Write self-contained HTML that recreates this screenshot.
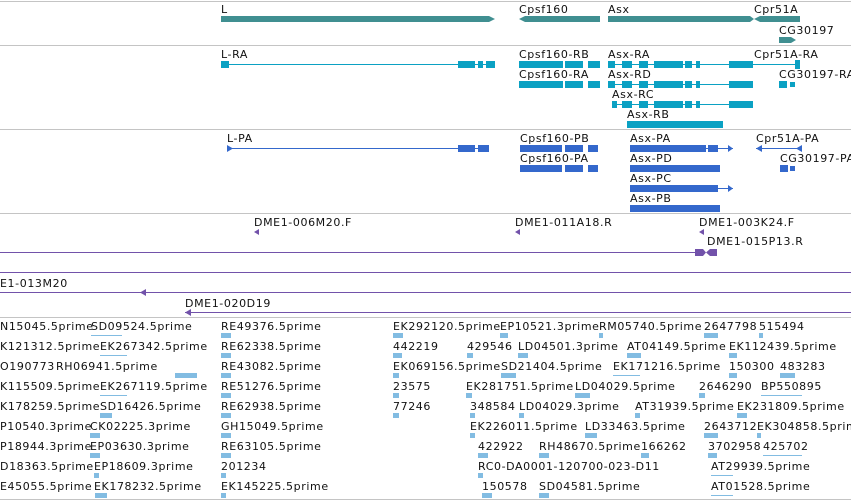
<!DOCTYPE html>
<html><head><meta charset="utf-8"><style>
html,body{margin:0;padding:0;background:#fff;width:851px;height:501px;overflow:hidden}
svg{display:block}
text{font-family:"DejaVu Sans","Liberation Sans",sans-serif;font-size:11px;letter-spacing:0.6px;fill:#111}
</style></head><body>
<svg width="851" height="501" viewBox="0 0 851 501">
<g stroke="#c4c4c4" stroke-width="1">
<line x1="0" y1="1.5" x2="851" y2="1.5"/><line x1="0" y1="45.5" x2="851" y2="45.5"/>
<line x1="0" y1="129.5" x2="851" y2="129.5"/><line x1="0" y1="213.5" x2="851" y2="213.5"/>
<line x1="0" y1="317.5" x2="851" y2="317.5"/><line x1="0" y1="499.5" x2="851" y2="499.5"/>
</g>
<g fill="#408f91">
<polygon points="221,16 489,16 495,19 489,22 221,22"/>
<polygon points="525,16 600,16 600,22 525,22 519,19"/>
<polygon points="608,16 750,16 754,19 760,16 800,16 800,22 760,22 754,19 750,22 608,22"/>
<polygon points="779,37 791,37 796,40 791,43 779,43"/>
</g>
<text x="221" y="13">L</text><text x="519" y="13">Cpsf160</text><text x="608" y="13">Asx</text><text x="754" y="13">Cpr51A</text><text x="779" y="34">CG30197</text>
<g fill="#0ba1c3" stroke="#0ba1c3">
<line x1="221" y1="64.5" x2="495" y2="64.5"/>
<line x1="608" y1="64.5" x2="800" y2="64.5"/>
<line x1="608" y1="84.5" x2="753" y2="84.5"/>
<line x1="612" y1="104.5" x2="753" y2="104.5"/>
<line x1="627" y1="124.5" x2="723" y2="124.5"/>
</g>
<g fill="#0ba1c3">
<rect x="221" y="61" width="8" height="7"/><rect x="458" y="61" width="17" height="7"/><rect x="478" y="61" width="5" height="7"/><rect x="486" y="61" width="9" height="7"/>
<rect x="519" y="61" width="44" height="7"/><rect x="565" y="61" width="18" height="7"/><rect x="588" y="61" width="12" height="7"/>
<rect x="519" y="81" width="44" height="7"/><rect x="565" y="81" width="18" height="7"/><rect x="588" y="81" width="12" height="7"/>
<rect x="608" y="61" width="7" height="7"/><rect x="622" y="61" width="10" height="7"/><rect x="639" y="61" width="9" height="7"/><rect x="654" y="61" width="29" height="7"/><rect x="685" y="61" width="7" height="7"/><rect x="696" y="61" width="4" height="7"/><rect x="729" y="61" width="24" height="7"/><rect x="795" y="60" width="5" height="9"/>
<rect x="608" y="81" width="7" height="7"/><rect x="622" y="81" width="10" height="7"/><rect x="639" y="81" width="9" height="7"/><rect x="654" y="81" width="29" height="7"/><rect x="685" y="81" width="7" height="7"/><rect x="696" y="81" width="4" height="7"/><rect x="729" y="81" width="24" height="7"/>
<rect x="612" y="101" width="5" height="7"/><rect x="622" y="101" width="10" height="7"/><rect x="639" y="101" width="9" height="7"/><rect x="654" y="101" width="29" height="7"/><rect x="685" y="101" width="7" height="7"/><rect x="696" y="101" width="4" height="7"/><rect x="729" y="101" width="24" height="7"/>
<rect x="627" y="121" width="96" height="7"/>
<rect x="779" y="81" width="8" height="7"/><rect x="790" y="82" width="5" height="5"/>
</g>
<text x="221" y="58">L-RA</text><text x="519" y="58">Cpsf160-RB</text><text x="519" y="78">Cpsf160-RA</text><text x="608" y="58">Asx-RA</text><text x="754" y="58">Cpr51A-RA</text>
<text x="608" y="78">Asx-RD</text><text x="779" y="78">CG30197-RA</text><text x="612" y="98">Asx-RC</text><text x="627" y="118">Asx-RB</text>
<g stroke="#3468cc">
<line x1="227" y1="148.5" x2="489" y2="148.5"/>
<line x1="630" y1="148.5" x2="733" y2="148.5"/>
<line x1="630" y1="188.5" x2="733" y2="188.5"/>
<line x1="756" y1="148.5" x2="802" y2="148.5"/>
</g>
<g fill="#3468cc">
<polygon points="227,145 233,148.5 227,152"/><rect x="458" y="145" width="17" height="7"/><rect x="478" y="145" width="11" height="7"/>
<rect x="520" y="145" width="42" height="7"/><rect x="565" y="145" width="18" height="7"/><rect x="588" y="145" width="10" height="7"/>
<rect x="520" y="165" width="42" height="7"/><rect x="565" y="165" width="18" height="7"/><rect x="588" y="165" width="10" height="7"/>
<rect x="630" y="145" width="76" height="7"/><rect x="708" y="145" width="10" height="7"/><polygon points="728,145 733,148.5 728,152"/>
<rect x="630" y="165" width="90" height="7"/>
<rect x="630" y="185" width="88" height="7"/><polygon points="728,185 733,188.5 728,192"/>
<rect x="630" y="205" width="90" height="7"/>
<polygon points="756,148.5 762,145 762,152"/><polygon points="802,145 802,152 796,148.5"/>
<rect x="780" y="165" width="8" height="7"/><rect x="790" y="166" width="5" height="5"/>
</g>
<text x="227" y="142">L-PA</text><text x="520" y="142">Cpsf160-PB</text><text x="520" y="162">Cpsf160-PA</text><text x="630" y="142">Asx-PA</text><text x="756" y="142">Cpr51A-PA</text>
<text x="630" y="162">Asx-PD</text><text x="780" y="162">CG30197-PA</text><text x="630" y="182">Asx-PC</text><text x="630" y="202">Asx-PB</text>
<g stroke="#7252aa">
<line x1="0" y1="252.5" x2="705" y2="252.5"/>
<line x1="0" y1="272.5" x2="851" y2="272.5"/>
<line x1="0" y1="292.5" x2="851" y2="292.5"/>
<line x1="185" y1="312.5" x2="851" y2="312.5"/>
</g>
<g fill="#7252aa">
<polygon points="254,232 259,229 259,235"/><polygon points="515,232 520,229 520,235"/><polygon points="699,232 704,229 704,235"/>
<polygon points="695,249 703,249 706,252.5 710,249 717,249 717,256 710,256 706,252.5 703,256 695,256"/>
<polygon points="140,292.5 146,289 146,296"/><polygon points="185,312.5 191,309 191,316"/>
</g>
<text x="254" y="226">DME1-006M20.F</text><text x="515" y="226">DME1-011A18.R</text><text x="699" y="226">DME1-003K24.F</text><text x="707" y="245">DME1-015P13.R</text>
<text x="0" y="287">E1-013M20</text><text x="185" y="307">DME1-020D19</text>
<g>
<text x="0" y="330">N15045.5prime</text><text x="91" y="330">SD09524.5prime</text><text x="221" y="330">RE49376.5prime</text><text x="393" y="330">EK292120.5prime</text><text x="500" y="330">EP10521.3prime</text><text x="599" y="330">RM05740.5prime</text><text x="704" y="330">2647798</text><text x="759" y="330">515494</text>
<text x="0" y="350">K121312.5prime</text><text x="100" y="350">EK267342.5prime</text><text x="221" y="350">RE62338.5prime</text><text x="393" y="350">442219</text><text x="467" y="350">429546</text><text x="518" y="350">LD04501.3prime</text><text x="627" y="350">AT04149.5prime</text><text x="729" y="350">EK112439.5prime</text>
<text x="0" y="370">O190773</text><text x="56" y="370">RH06941.5prime</text><text x="221" y="370">RE43082.5prime</text><text x="393" y="370">EK069156.5prime</text><text x="501" y="370">SD21404.5prime</text><text x="613" y="370">EK171216.5prime</text><text x="729" y="370">150300</text><text x="780" y="370">483283</text>
<text x="0" y="390">K115509.5prime</text><text x="100" y="390">EK267119.5prime</text><text x="221" y="390">RE51276.5prime</text><text x="393" y="390">23575</text><text x="466" y="390">EK281751.5prime</text><text x="575" y="390">LD04029.5prime</text><text x="699" y="390">2646290</text><text x="761" y="390">BP550895</text>
<text x="0" y="410">K178259.5prime</text><text x="100" y="410">SD16426.5prime</text><text x="221" y="410">RE62938.5prime</text><text x="393" y="410">77246</text><text x="470" y="410">348584</text><text x="519" y="410">LD04029.3prime</text><text x="635" y="410">AT31939.5prime</text><text x="737" y="410">EK231809.5prime</text>
<text x="0" y="430">P10540.3prime</text><text x="90" y="430">CK02225.3prime</text><text x="221" y="430">GH15049.5prime</text><text x="470" y="430">EK226011.5prime</text><text x="585" y="430">LD33463.5prime</text><text x="704" y="430">2643712</text><text x="757" y="430">EK304858.5prime</text>
<text x="0" y="450">P18944.3prime</text><text x="90" y="450">EP03630.3prime</text><text x="221" y="450">RE63105.5prime</text><text x="478" y="450">422922</text><text x="539" y="450">RH48670.5prime</text><text x="641" y="450">166262</text><text x="708" y="450">3702958</text><text x="763" y="450">425702</text>
<text x="0" y="470">D18363.5prime</text><text x="94" y="470">EP18609.3prime</text><text x="221" y="470">201234</text><text x="478" y="470">RC0-DA0001-120700-023-D11</text><text x="711" y="470">AT29939.5prime</text>
<text x="0" y="490">E45055.5prime</text><text x="94" y="490">EK178232.5prime</text><text x="221" y="490">EK145225.5prime</text><text x="482" y="490">150578</text><text x="539" y="490">SD04581.5prime</text><text x="711" y="490">AT01528.5prime</text>
</g>
<g fill="#82bce2">
<rect x="221" y="333" width="10" height="5"/><rect x="221" y="353" width="10" height="5"/><rect x="221" y="373" width="10" height="5"/><rect x="221" y="393" width="10" height="5"/><rect x="221" y="413" width="10" height="5"/><rect x="221" y="433" width="10" height="5"/><rect x="221" y="453" width="10" height="5"/><rect x="221" y="473" width="5" height="5"/><rect x="221" y="493" width="5" height="5"/>
<rect x="393" y="333" width="10" height="5"/><rect x="393" y="353" width="9" height="5"/><rect x="393" y="373" width="6" height="5"/><rect x="393" y="393" width="6" height="5"/><rect x="393" y="413" width="6" height="5"/>
<rect x="500" y="333" width="8" height="5"/><rect x="175" y="373" width="22" height="5"/><rect x="100" y="413" width="12" height="5"/>
<rect x="90" y="433" width="10" height="5"/><rect x="90" y="453" width="10" height="5"/><rect x="94" y="473" width="5" height="5"/><rect x="95" y="493" width="12" height="5"/>
<rect x="501" y="373" width="15" height="5"/><rect x="467" y="353" width="6" height="5"/><rect x="518" y="353" width="10" height="5"/>
<rect x="466" y="393" width="6" height="5"/><rect x="575" y="393" width="15" height="5"/><rect x="470" y="413" width="5" height="5"/><rect x="519" y="413" width="5" height="5"/>
<rect x="470" y="433" width="5" height="5"/><rect x="585" y="433" width="12" height="5"/><rect x="478" y="453" width="10" height="5"/><rect x="539" y="453" width="10" height="5"/><rect x="641" y="453" width="8" height="5"/>
<rect x="478" y="473" width="5" height="5"/><rect x="482" y="493" width="10" height="5"/><rect x="539" y="493" width="10" height="5"/>
<rect x="599" y="333" width="4" height="5"/><rect x="704" y="333" width="14" height="5"/><rect x="759" y="333" width="4" height="5"/>
<rect x="627" y="353" width="14" height="5"/><rect x="729" y="353" width="8" height="5"/><rect x="729" y="373" width="8" height="5"/><rect x="780" y="373" width="15" height="5"/>
<rect x="699" y="393" width="6" height="5"/><rect x="635" y="413" width="5" height="5"/><rect x="737" y="413" width="10" height="5"/>
<rect x="704" y="433" width="14" height="5"/><rect x="757" y="433" width="4" height="5"/><rect x="708" y="453" width="9" height="5"/>
</g>
<g stroke="#82bce2">
<line x1="91" y1="335.5" x2="122" y2="335.5"/><line x1="100" y1="355.5" x2="127" y2="355.5"/><line x1="100" y1="395.5" x2="127" y2="395.5"/>
<line x1="613" y1="375.5" x2="640" y2="375.5"/><line x1="761" y1="395.5" x2="802" y2="395.5"/><line x1="763" y1="455.5" x2="802" y2="455.5"/>
<line x1="711" y1="475.5" x2="733" y2="475.5"/><line x1="711" y1="495.5" x2="733" y2="495.5"/>
</g>
</svg>
</body></html>
